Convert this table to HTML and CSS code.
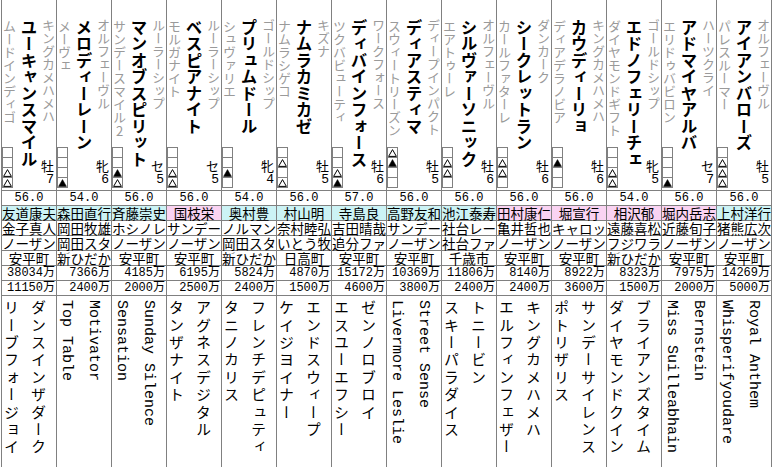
FILE: index.html
```html
<!DOCTYPE html>
<html lang="ja">
<head>
<meta charset="utf-8">
<title>出馬表</title>
<link rel="stylesheet" href="styles.css">
</head>
<body>
<div class="sheet">

<div class="col">
  <div class="head">
    <div class="left"><div class="dam">ムードインディゴ</div><div class="marks"><span class="mk"></span><span class="mk"></span><span class="mk"><svg viewBox="0 0 9 8"><polygon class="tw" points="4.5,0.6 8.4,7.4 0.6,7.4"/></svg></span><span class="mk"><svg viewBox="0 0 9 8"><polygon class="tw" points="4.5,0.6 8.4,7.4 0.6,7.4"/></svg></span></div></div>
    <div class="name">ユーキャンスマイル</div>
    <div class="right"><div class="sire">キングカメハメハ</div><div class="sex"><span class="sx">牡</span><span class="age">7</span></div></div>
  </div>
  <div class="c wt">56.0</div>
  <div class="c jk west">友道康夫</div>
  <div class="c">金子真人</div>
  <div class="c">ノーザン</div>
  <div class="c">安平町</div>
  <div class="c num">38034万</div>
  <div class="c num">11150万</div>
  <div class="bot">ダンスインザダーク<br>リーブフォージョイ</div>
</div>

<div class="col">
  <div class="head">
    <div class="left"><div class="dam">メーヴェ</div><div class="marks"><span class="mk"></span><span class="mk"></span><span class="mk"></span><span class="mk"><svg viewBox="0 0 9 8"><polygon class="tb" points="4.5,0.6 8.4,7.4 0.6,7.4"/></svg></span></div></div>
    <div class="name">メロディーレーン</div>
    <div class="right"><div class="sire">オルフェーヴル</div><div class="sex"><span class="sx">牝</span><span class="age">6</span></div></div>
  </div>
  <div class="c wt">54.0</div>
  <div class="c jk west">森田直行</div>
  <div class="c">岡田牧雄</div>
  <div class="c">岡田スタ</div>
  <div class="c">新ひだか</div>
  <div class="c num">7366万</div>
  <div class="c num">2400万</div>
  <div class="bot en">Motivator<br>Top Table</div>
</div>

<div class="col">
  <div class="head">
    <div class="left"><div class="dam">サンデースマイル<span class="tcy">2</span></div><div class="marks"><span class="mk"></span><span class="mk"></span><span class="mk"><svg viewBox="0 0 9 8"><polygon class="tb" points="4.5,0.6 8.4,7.4 0.6,7.4"/></svg></span><span class="mk"><svg viewBox="0 0 9 8"><polygon class="tw" points="4.5,0.6 8.4,7.4 0.6,7.4"/></svg></span></div></div>
    <div class="name">マンオブスピリット</div>
    <div class="right"><div class="sire">ルーラーシップ</div><div class="sex"><span class="sx">セ</span><span class="age">5</span></div></div>
  </div>
  <div class="c wt">56.0</div>
  <div class="c jk west">斉藤崇史</div>
  <div class="c">ホシノレ</div>
  <div class="c">ノーザン</div>
  <div class="c">安平町</div>
  <div class="c num">4185万</div>
  <div class="c num">2000万</div>
  <div class="bot en">Sunday Silence<br>Sensation</div>
</div>

<div class="col">
  <div class="head">
    <div class="left"><div class="dam">モルガナイト</div><div class="marks"><span class="mk"></span><span class="mk"></span><span class="mk"><svg viewBox="0 0 9 8"><polygon class="tw" points="4.5,0.6 8.4,7.4 0.6,7.4"/></svg></span><span class="mk"><svg viewBox="0 0 9 8"><polygon class="tw" points="4.5,0.6 8.4,7.4 0.6,7.4"/></svg></span></div></div>
    <div class="name">ベスピアナイト</div>
    <div class="right"><div class="sire">ルーラーシップ</div><div class="sex"><span class="sx">セ</span><span class="age">5</span></div></div>
  </div>
  <div class="c wt">56.0</div>
  <div class="c jk east">国枝栄</div>
  <div class="c">サンデー</div>
  <div class="c">ノーザン</div>
  <div class="c">安平町</div>
  <div class="c num">6195万</div>
  <div class="c num">2500万</div>
  <div class="bot">アグネスデジタル<br>タンザナイト</div>
</div>

<div class="col">
  <div class="head">
    <div class="left"><div class="dam">シュヴァリエ</div><div class="marks"><span class="mk"></span><span class="mk"></span><span class="mk"><svg viewBox="0 0 9 8"><polygon class="tb" points="4.5,0.6 8.4,7.4 0.6,7.4"/></svg></span><span class="mk"></span></div></div>
    <div class="name">プリュムドール</div>
    <div class="right"><div class="sire">ゴールドシップ</div><div class="sex"><span class="sx">牝</span><span class="age">4</span></div></div>
  </div>
  <div class="c wt">54.0</div>
  <div class="c jk west">奥村豊</div>
  <div class="c">ノルマン</div>
  <div class="c">岡田スタ</div>
  <div class="c">新ひだか</div>
  <div class="c num">5824万</div>
  <div class="c num">2400万</div>
  <div class="bot">フレンチデピュティ<br>タニノカリス</div>
</div>

<div class="col">
  <div class="head">
    <div class="left"><div class="dam">ナムラシゲコ</div><div class="marks"><span class="mk"></span><span class="mk"><svg viewBox="0 0 9 8"><polygon class="tw" points="4.5,0.6 8.4,7.4 0.6,7.4"/></svg></span><span class="mk"></span><span class="mk"><svg viewBox="0 0 9 8"><polygon class="tw" points="4.5,0.6 8.4,7.4 0.6,7.4"/></svg></span></div></div>
    <div class="name">ナムラカミカゼ</div>
    <div class="right"><div class="sire">キズナ</div><div class="sex"><span class="sx">牡</span><span class="age">5</span></div></div>
  </div>
  <div class="c wt">56.0</div>
  <div class="c jk west">村山明</div>
  <div class="c">奈村睦弘</div>
  <div class="c">いとう牧</div>
  <div class="c">日高町</div>
  <div class="c num">4870万</div>
  <div class="c num">1500万</div>
  <div class="bot">エンドスウィープ<br>ケイジヨイナー</div>
</div>

<div class="col">
  <div class="head">
    <div class="left"><div class="dam">ツクバビューティ</div><div class="marks"><span class="mk"></span><span class="mk"></span><span class="mk"><svg viewBox="0 0 9 8"><polygon class="tw" points="4.5,0.6 8.4,7.4 0.6,7.4"/></svg></span><span class="mk"><svg viewBox="0 0 9 8"><polygon class="tb" points="4.5,0.6 8.4,7.4 0.6,7.4"/></svg></span></div></div>
    <div class="name">ディバインフォース</div>
    <div class="right"><div class="sire">ワークフォース</div><div class="sex"><span class="sx">牡</span><span class="age">6</span></div></div>
  </div>
  <div class="c wt">57.0</div>
  <div class="c jk west">寺島良</div>
  <div class="c">吉田晴哉</div>
  <div class="c">追分ファ</div>
  <div class="c">安平町</div>
  <div class="c num">15172万</div>
  <div class="c num">4600万</div>
  <div class="bot">ゼンノロブロイ<br>エスユーエフシー</div>
</div>

<div class="col">
  <div class="head">
    <div class="left"><div class="dam">スウィートリーズン</div><div class="marks"><span class="mk"><svg viewBox="0 0 9 8"><polygon class="tw" points="4.5,0.6 8.4,7.4 0.6,7.4"/></svg></span><span class="mk"><svg viewBox="0 0 9 8"><polygon class="tb" points="4.5,0.6 8.4,7.4 0.6,7.4"/></svg></span><span class="mk"></span><span class="mk"></span></div></div>
    <div class="name">ディアスティマ</div>
    <div class="right"><div class="sire">ディープインパクト</div><div class="sex"><span class="sx">牡</span><span class="age">5</span></div></div>
  </div>
  <div class="c wt">56.0</div>
  <div class="c jk west">高野友和</div>
  <div class="c">サンデー</div>
  <div class="c">ノーザン</div>
  <div class="c">安平町</div>
  <div class="c num">10369万</div>
  <div class="c num">3800万</div>
  <div class="bot en">Street Sense<br>Livermore Leslie</div>
</div>

<div class="col">
  <div class="head">
    <div class="left"><div class="dam">エアトゥーレ</div><div class="marks"><span class="mk"></span><span class="mk"><svg viewBox="0 0 9 8"><polygon class="tw" points="4.5,0.6 8.4,7.4 0.6,7.4"/></svg></span><span class="mk"><svg viewBox="0 0 9 8"><polygon class="tw" points="4.5,0.6 8.4,7.4 0.6,7.4"/></svg></span><span class="mk"></span></div></div>
    <div class="name">シルヴァーソニック</div>
    <div class="right"><div class="sire">オルフェーヴル</div><div class="sex"><span class="sx">牡</span><span class="age">6</span></div></div>
  </div>
  <div class="c wt">56.0</div>
  <div class="c jk west">池江泰寿</div>
  <div class="c">社台レー</div>
  <div class="c">社台ファ</div>
  <div class="c">千歳市</div>
  <div class="c num">11806万</div>
  <div class="c num">2400万</div>
  <div class="bot">トニービン<br>スキーパラダイス</div>
</div>

<div class="col">
  <div class="head">
    <div class="left"><div class="dam">カールファターレ</div><div class="marks"><span class="mk"></span><span class="mk"><svg viewBox="0 0 9 8"><polygon class="tw" points="4.5,0.6 8.4,7.4 0.6,7.4"/></svg></span><span class="mk"><svg viewBox="0 0 9 8"><polygon class="tw" points="4.5,0.6 8.4,7.4 0.6,7.4"/></svg></span><span class="mk"></span></div></div>
    <div class="name">シークレットラン</div>
    <div class="right"><div class="sire">ダンカーク</div><div class="sex"><span class="sx">牡</span><span class="age">6</span></div></div>
  </div>
  <div class="c wt">56.0</div>
  <div class="c jk east">田村康仁</div>
  <div class="c">亀井哲也</div>
  <div class="c">ノーザン</div>
  <div class="c">安平町</div>
  <div class="c num">8140万</div>
  <div class="c num">2400万</div>
  <div class="bot">キングカメハメハ<br>エルフィンフェザー</div>
</div>

<div class="col">
  <div class="head">
    <div class="left"><div class="dam">ディアデラノビア</div><div class="marks"><span class="mk"></span><span class="mk"><svg viewBox="0 0 9 8"><polygon class="tb" points="4.5,0.6 8.4,7.4 0.6,7.4"/></svg></span><span class="mk"></span><span class="mk"></span></div></div>
    <div class="name">カウディーリョ</div>
    <div class="right"><div class="sire">キングカメハメハ</div><div class="sex"><span class="sx">牡</span><span class="age">6</span></div></div>
  </div>
  <div class="c wt">56.0</div>
  <div class="c jk east">堀宣行</div>
  <div class="c">キャロッ</div>
  <div class="c">ノーザン</div>
  <div class="c">安平町</div>
  <div class="c num">8922万</div>
  <div class="c num">3600万</div>
  <div class="bot">サンデーサイレンス<br>ポトリザリス</div>
</div>

<div class="col">
  <div class="head">
    <div class="left"><div class="dam">ダイヤモンドギフト</div><div class="marks"><span class="mk"></span><span class="mk"></span><span class="mk"><svg viewBox="0 0 9 8"><polygon class="tw" points="4.5,0.6 8.4,7.4 0.6,7.4"/></svg></span><span class="mk"><svg viewBox="0 0 9 8"><polygon class="tw" points="4.5,0.6 8.4,7.4 0.6,7.4"/></svg></span></div></div>
    <div class="name">エドノフェリーチェ</div>
    <div class="right"><div class="sire">ゴールドシップ</div><div class="sex"><span class="sx">牝</span><span class="age">5</span></div></div>
  </div>
  <div class="c wt">54.0</div>
  <div class="c jk east">相沢郁</div>
  <div class="c">遠藤喜松</div>
  <div class="c">フジワラ</div>
  <div class="c">新ひだか</div>
  <div class="c num">8323万</div>
  <div class="c num">1500万</div>
  <div class="bot">ブライアンズタイム<br>ダイヤモンドクイン</div>
</div>

<div class="col">
  <div class="head">
    <div class="left"><div class="dam">エリドゥバビロン</div><div class="marks"><span class="mk"></span><span class="mk"></span><span class="mk"></span><span class="mk"><svg viewBox="0 0 9 8"><polygon class="tb" points="4.5,0.6 8.4,7.4 0.6,7.4"/></svg></span></div></div>
    <div class="name">アドマイヤアルバ</div>
    <div class="right"><div class="sire">ハーツクライ</div><div class="sex"><span class="sx">セ</span><span class="age">7</span></div></div>
  </div>
  <div class="c wt">56.0</div>
  <div class="c jk east">堀内岳志</div>
  <div class="c">近藤旬子</div>
  <div class="c">ノーザン</div>
  <div class="c">安平町</div>
  <div class="c num">7975万</div>
  <div class="c num">2000万</div>
  <div class="bot en">Bernstein<br>Miss Suilleabhain</div>
</div>

<div class="col">
  <div class="head">
    <div class="left"><div class="dam">パレスルーマー</div><div class="marks"><span class="mk"></span><span class="mk"><svg viewBox="0 0 9 8"><polygon class="tw" points="4.5,0.6 8.4,7.4 0.6,7.4"/></svg></span><span class="mk"><svg viewBox="0 0 9 8"><polygon class="tw" points="4.5,0.6 8.4,7.4 0.6,7.4"/></svg></span><span class="mk"><svg viewBox="0 0 9 8"><polygon class="tw" points="4.5,0.6 8.4,7.4 0.6,7.4"/></svg></span></div></div>
    <div class="name">アイアンバローズ</div>
    <div class="right"><div class="sire">オルフェーヴル</div><div class="sex"><span class="sx">牡</span><span class="age">5</span></div></div>
  </div>
  <div class="c wt">56.0</div>
  <div class="c jk west">上村洋行</div>
  <div class="c">猪熊広次</div>
  <div class="c">ノーザン</div>
  <div class="c">安平町</div>
  <div class="c num">14269万</div>
  <div class="c num">5000万</div>
  <div class="bot en">Royal Anthem<br>Whisperifyoudare</div>
</div>

</div>
</body>
</html>
```

FILE: styles.css
```css
html, body {
  margin: 0;
  padding: 0;
  background: #ffffff;
}

body {
  font-family: "Noto Sans CJK JP", "Noto Sans", sans-serif;
  color: #000000;
  width: 772px;
  height: 467px;
  overflow: hidden;
}

.sheet {
  display: flex;
  margin-left: 1px;
  height: 467px;
  overflow: hidden;
}

.col {
  width: 54px;
  flex: none;
  border-left: 1px solid #808080;
  display: flex;
  flex-direction: column;
}

.col:last-child {
  border-right: 1px solid #808080;
}

/* header block */
.head {
  height: 190px;
  flex: none;
  display: grid;
  grid-template-columns: 15px 23px 16px;
  border-bottom: 1px solid #808080;
}

.left {
  display: flex;
  flex-direction: column;
  justify-content: space-between;
  padding-bottom: 2px;
  min-width: 0;
}

.dam {
  writing-mode: vertical-rl;
  font-size: 13px;
  line-height: 15px;
  width: 15px;
  color: #9a9a9a;
  padding-top: 20px;
  white-space: nowrap;
}

.tcy {
  text-combine-upright: all;
}

.marks {
  display: flex;
  flex-direction: column;
}

.mk {
  width: 9px;
  height: 9px;
  border: 1px solid #808080;
  margin-top: -1px;
  display: flex;
  align-items: center;
  justify-content: center;
}

.mk:first-child {
  margin-top: 0;
}

.mk svg {
  width: 9px;
  height: 8px;
  display: block;
}

.tw {
  fill: none;
  stroke: #000000;
  stroke-width: 1;
}

.tb {
  fill: #000000;
  stroke: #000000;
  stroke-width: 0.6;
}

.name {
  writing-mode: vertical-rl;
  font-size: 16.5px;
  font-weight: 700;
  line-height: 23px;
  width: 23px;
  padding-top: 19px;
  white-space: nowrap;
}

.right {
  display: flex;
  flex-direction: column;
  justify-content: space-between;
  min-width: 0;
}

.sire {
  writing-mode: vertical-rl;
  font-size: 13px;
  line-height: 16px;
  width: 16px;
  color: #9a9a9a;
  padding-top: 19px;
  white-space: nowrap;
}

.sex {
  display: flex;
  flex-direction: column;
  align-items: flex-end;
  padding: 0 2px 3px 0;
  font-size: 13px;
  line-height: 14px;
}

.age {
  font-family: "Liberation Mono", monospace;
  font-size: 13px;
}

/* data rows */
.c {
  flex: none;
  height: 14px;
  border-bottom: 1px solid #808080;
  font-size: 13.5px;
  line-height: 14px;
  text-align: center;
  white-space: nowrap;
}

.wt {
  font-family: "Liberation Mono", monospace;
  font-size: 12px;
}

.west {
  background: #ccf3f5;
}

.east {
  background: #fad3f2;
}

.num {
  font-family: "Liberation Mono", "Noto Sans CJK JP", monospace;
  font-size: 12px;
  text-align: right;
  padding-right: 1px;
}

/* pedigree block */
.bot {
  flex: 1;
  min-height: 0;
  writing-mode: vertical-rl;
  font-size: 15px;
  letter-spacing: 2.4px;
  line-height: 27px;
  padding: 4px 4px 0 0;
  white-space: nowrap;
  overflow: hidden;
}

.bot.en {
  font-family: "Liberation Mono", monospace;
  letter-spacing: 0;
}
```
